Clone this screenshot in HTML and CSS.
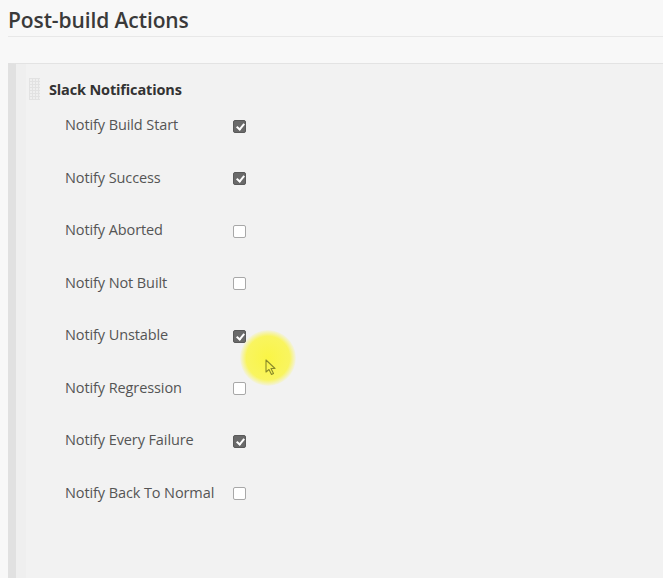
FILE: index.html
```html
<!DOCTYPE html>
<html>
<head>
<meta charset="utf-8">
<link rel="stylesheet" href="styles.css">
</head>
<body>
<div class="page">
  <h2 class="title">Post-build Actions</h2>
  <div class="section">
    <div class="section-head">
      <span class="handle"></span>
      <span class="section-name">Slack Notifications</span>
    </div>
    <div class="rows">
      <label class="row"><span class="lbl">Notify Build Start</span><span class="cb checked"></span></label>
      <label class="row"><span class="lbl">Notify Success</span><span class="cb checked"></span></label>
      <label class="row"><span class="lbl">Notify Aborted</span><span class="cb"></span></label>
      <label class="row"><span class="lbl">Notify Not Built</span><span class="cb"></span></label>
      <label class="row"><span class="lbl">Notify Unstable</span><span class="cb checked"></span></label>
      <label class="row"><span class="lbl">Notify Regression</span><span class="cb"></span></label>
      <label class="row"><span class="lbl">Notify Every Failure</span><span class="cb checked"></span></label>
      <label class="row"><span class="lbl">Notify Back To Normal</span><span class="cb"></span></label>
    </div>
  </div>
  <div class="cursor-glow"></div>
  <svg class="cursor" width="12" height="17" viewBox="0 0 12 17"><path d="M1 1 L1 13 L4 10.5 L6.5 15.5 L8.5 14.5 L6 9.5 L10 9.5 Z" fill="none" stroke="#8a8a2a" stroke-width="1.1" stroke-linejoin="round"/></svg>
</div>
</body>
</html>
```
FILE: styles.css
```css
html, body {
  margin: 0;
  padding: 0;
  background: #f8f8f8;
  height: 100%;
}
.page {
  position: relative;
  font-family: "Open Sans", "Noto Sans", sans-serif;
  height: 578px;
  display: flex;
  flex-direction: column;
  overflow: hidden;
}
.title {
  margin: 0 0 26px 8px;
  height: 37px;
  box-sizing: border-box;
  padding-top: 7px;
  font-size: 21px;
  font-weight: 600;
  color: #3a3a3a;
  line-height: 26px;
  letter-spacing: -0.1px;
  border-bottom: 1px solid #e8e8e8;
}
.section {
  flex: 1;
  margin-left: 8px;
  border-top: 1px solid #e3e3e3;
  border-left: 8px solid #e1e1e1;
  background: linear-gradient(to right, #efefef 0, #efefef 10px, #f2f2f2 10px);
  padding-top: 14px;
}
.section-head {
  display: flex;
  align-items: center;
  padding-left: 13px;
  gap: 9px;
  height: 22px;
}
.handle {
  width: 11px;
  height: 22px;
  background-color: #efefef;
  background-image:
    linear-gradient(to right, #e2e2e2 1px, transparent 1px),
    linear-gradient(to bottom, #e2e2e2 1px, transparent 1px);
  background-size: 3px 3px;
}
.section-name {
  font-size: 14.5px;
  font-weight: 700;
  color: #333;
  letter-spacing: -0.15px;
}
.rows {
  padding-left: 49px;
  margin-top: 13px;
  display: flex;
  flex-direction: column;
  gap: 26.5px;
}
.row {
  display: flex;
  align-items: center;
  height: 26px;
}
.lbl {
  width: 168px;
  font-size: 14.5px;
  color: #555;
  margin-top: -3px;
  letter-spacing: -0.1px;
}
.cb {
  width: 13px;
  height: 13px;
  box-sizing: border-box;
  border: 1px solid #a8a8a8;
  border-radius: 2px;
  background: #fff;
  position: relative;
}
.cb.checked {
  background: #6a6a6a;
  border-color: #5a5a5a;
}
.cb.checked::after {
  content: "";
  position: absolute;
  left: 3.5px;
  top: 1px;
  width: 3px;
  height: 6px;
  border: solid #fff;
  border-width: 0 2px 2px 0;
  transform: rotate(40deg);
}
.cursor-glow {
  position: absolute;
  left: 240px;
  top: 330px;
  width: 56px;
  height: 56px;
  border-radius: 50%;
  background: radial-gradient(circle, rgba(250,245,60,0.95) 0, rgba(250,245,70,0.85) 55%, rgba(250,245,90,0) 72%);
}
.cursor {
  position: absolute;
  left: 265px;
  top: 359px;
}
```
